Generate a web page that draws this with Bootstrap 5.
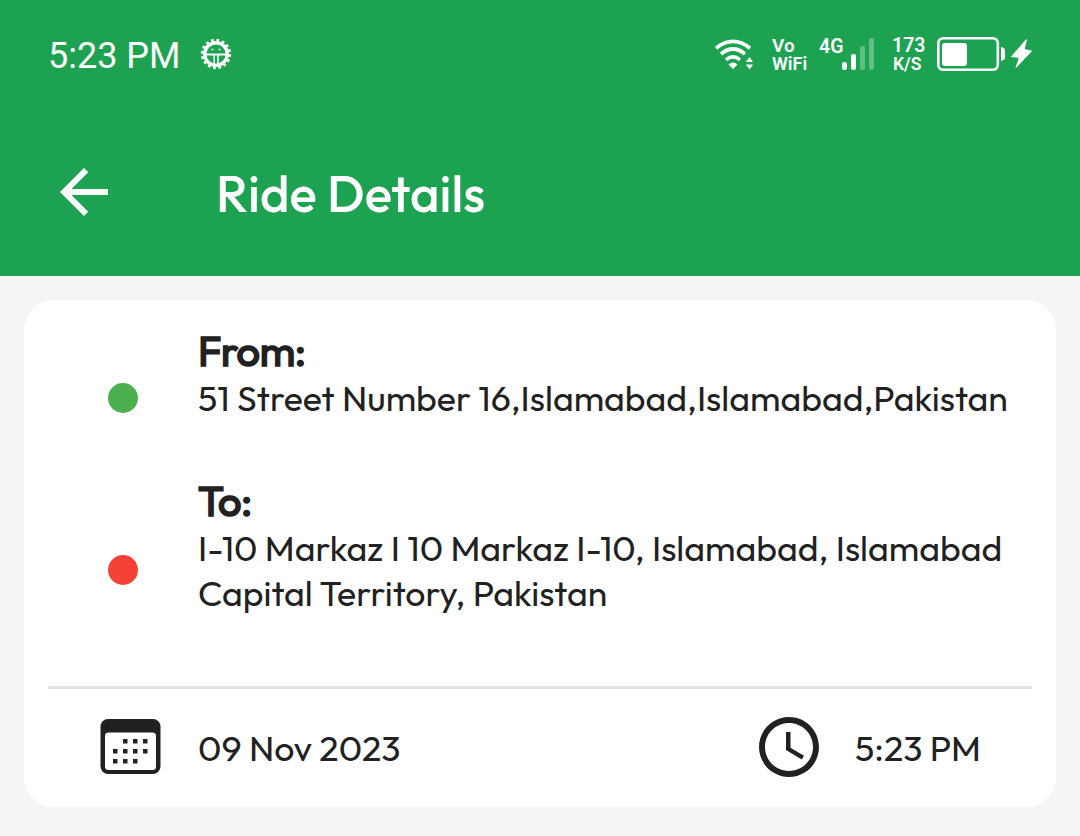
<!DOCTYPE html>
<html lang="en">
<head>
<meta charset="utf-8">
<meta name="viewport" content="width=device-width, initial-scale=1">
<title>Ride Details</title>
<link rel="stylesheet" href="https://cdn.jsdelivr.net/npm/bootstrap@5.3.0/dist/css/bootstrap.min.css">
<style>
  body { background: #f5f5f5; color: #212121; font-family: Outfit, Lato, sans-serif; font-size: 35.65px; font-weight: 400; line-height: 45px; overflow: hidden; }
  svg { display: block; flex: none; }
  .app-header { background: #1ca250; height: 276px; }
  .status-bar { height: 108px; padding-left: 48px; padding-right: 48px; font-family: Roboto, sans-serif; }
  .status-time { font-size: 36px; width: 152px; padding-top: 4px; white-space: nowrap; }
  .tiny { font-size: 18px; line-height: 18px; font-weight: 600; white-space: nowrap; padding-top: 1px; }
  .tiny > span { display: block; }
  .network-type { font-size: 19.5px; width: 23px; padding-top: 2px; }
  .carrier { font-size: 19px; }
  .speed { font-size: 19.5px; }
  .unit { font-size: 17.5px; padding-left: 1px; }
  .tool-bar { height: 168px; padding-left: 60px; }
  .screen-title { font-size: 51px; line-height: 60px; font-weight: 500; margin: 2px 0 0 108px; white-space: nowrap; }
  .ride-card { margin: 24px 24px 0; height: 507px; border-radius: 30px; padding: 26px 24px 0; }
  .stop { padding-left: 60px; }
  .stop + .stop { margin-top: 56px; }
  .dot { width: 30px; height: 30px; flex: none; margin: 49px 60px 0 0; }
  .dot-from { background: #4caf50; }
  .dot-to { background: #f44336; }
  .stop-label { font-size: 41.5px; line-height: 48px; padding-top: 1px; font-weight: 400; letter-spacing: -.45px; -webkit-text-stroke: 1.7px #212121; margin: 0; }
  .address-line { display: block; white-space: nowrap; }
  .rule { border-top: 3px solid #e0e0e0; margin-top: 71px; }
  .meta { height: 117px; padding-left: 52px; padding-right: 51px; }
  .calendar-icon { margin-bottom: 3px; }
  .clock-icon { margin-bottom: 1px; }
</style>
</head>
<body>
<header class="app-header text-white">
  <div class="status-bar d-flex align-items-center">
    <div class="status-time"><span>5:23 PM</span></div>
    <svg width="32" height="32" viewBox="0 0 32 32" fill="none" stroke="#fff">
      <circle cx="16" cy="16" r="11.300" stroke-width="3.400"/>
      <circle cx="16" cy="16" r="13.700" stroke-width="3" stroke-dasharray="2.800 2.580"/>
      <path d="M4 16.500h24" stroke-width="2"/><path d="M14.200 17v11M18 17v11" stroke-width="1.500"/>
      <path d="M11.500 11.500h2M18.500 11.500h2" stroke-width="1.500"/>
    </svg>
    <div class="d-flex align-items-center ms-auto">
      <svg width="57" height="34" viewBox="715 37 57 34">
        <g fill="none" stroke="#fff" stroke-width="3.700"><path d="M716 48.200Q733 34.600 750 48.200"/><path d="M721 54Q733 44 745 54"/><path d="M726 59.800Q733 54 740 59.800"/></g>
        <path d="M728.500 64.500Q733 60.500 737.500 64.500L733 69Z" fill="#fff"/>
        <path d="M749.500 57l3.600 5h-7.200zM749.500 69.500l3.600-5h-7.200z" fill="#fff"/>
      </svg>
      <div class="tiny" style="width:47px"><span class="carrier">Vo</span><span>WiFi</span></div>
      <div class="tiny network-type align-self-start">4G</div>
      <svg width="50" height="34" viewBox="842 37 50 34" fill="#fff">
        <rect x="842" y="62" width="5" height="8" rx="2"/><rect x="851" y="54" width="5" height="16" rx="2"/>
        <g opacity=".3"><rect x="860" y="46" width="5" height="24" rx="2"/><rect x="869" y="38" width="5" height="32" rx="2"/></g>
      </svg>
      <div class="tiny" style="width:45px"><span class="speed">173</span><span class="unit">K/S</span></div>
      <svg width="95" height="34" viewBox="937 37 95 34">
        <rect x="938.300" y="38.300" width="59.500" height="31.400" rx="5" fill="none" stroke="#fff" stroke-width="2.600"/>
        <rect x="942" y="43" width="25" height="23" rx="3" fill="#fff"/>
        <path d="M1001 47q4 .5 4 4v6q0 3.500-4 4z" fill="#fff"/>
        <path d="M1026.500 39.500L1011.500 56.500L1019.500 57.500L1016 67.500L1031.500 51L1024 49.500Z" fill="#fff" stroke="#fff" stroke-linejoin="round"/>
      </svg>
    </div>
  </div>
  <div class="tool-bar d-flex align-items-center">
    <svg width="48" height="48" viewBox="4 4 16 16" fill="#fff"><path d="M20 11H7.830l5.590-5.590L12 4l-8 8 8 8 1.410-1.410L7.830 13H20v-2z"/></svg>
    <h1 class="screen-title"><span>Ride Details</span></h1>
  </div>
</header>
<main class="ride-card bg-white">
  <section class="stop d-flex align-items-center">
    <div class="dot dot-from rounded-circle"></div>
    <div>
      <h2 class="stop-label">From:</h2>
      <span class="address-line">51 Street Number 16,Islamabad,Islamabad,Pakistan</span>
    </div>
  </section>
  <section class="stop d-flex align-items-center">
    <div class="dot dot-to rounded-circle"></div>
    <div>
      <h2 class="stop-label">To:</h2>
      <span class="address-line">I-10 Markaz I 10 Markaz I-10, Islamabad, Islamabad</span>
      <span class="address-line">Capital Territory, Pakistan</span>
    </div>
  </section>
  <div class="rule"></div>
  <div class="meta d-flex align-items-center justify-content-between">
    <div class="d-flex align-items-center">
      <svg class="calendar-icon" width="61" height="55" viewBox="0 0 61 55">
        <rect x=".5" width="60" height="55" rx="7.500" fill="#212121"/><rect x="5" y="13.500" width="51" height="37.500" rx="3.500" fill="#fff"/>
        <g fill="#212121"><path d="M23 20h4.500v4.500H23zM33 20h4.500v4.500H33zM43 20h4.500v4.500H43zM13 30h4.500v4.500H13zM23 30h4.500v4.500H23zM33 30h4.500v4.500H33zM43 30h4.500v4.500H43zM13 40h4.500v4.500H13zM23 40h4.500v4.500H23zM33 40h4.500v4.500H33z"/></g>
      </svg>
      <span style="padding-left:37px">09 Nov 2023</span>
    </div>
    <div class="d-flex align-items-center">
      <svg class="clock-icon" width="60" height="60" viewBox="2 2 20 20" fill="#212121"><path d="M11.990 2C6.470 2 2 6.480 2 12s4.470 10 9.990 10C17.520 22 22 17.520 22 12S17.520 2 11.990 2zM12 20c-4.420 0-8-3.580-8-8s3.580-8 8-8 8 3.580 8 8-3.580 8-8 8zM12.500 7H11v6l5.250 3.150.750-1.230-4.500-2.670z"/></svg>
      <span style="padding-left:36px">5:23 PM</span>
    </div>
  </div>
</main>
<script src="https://cdn.jsdelivr.net/npm/bootstrap@5.3.0/dist/js/bootstrap.bundle.min.js"></script>
</body>
</html>
